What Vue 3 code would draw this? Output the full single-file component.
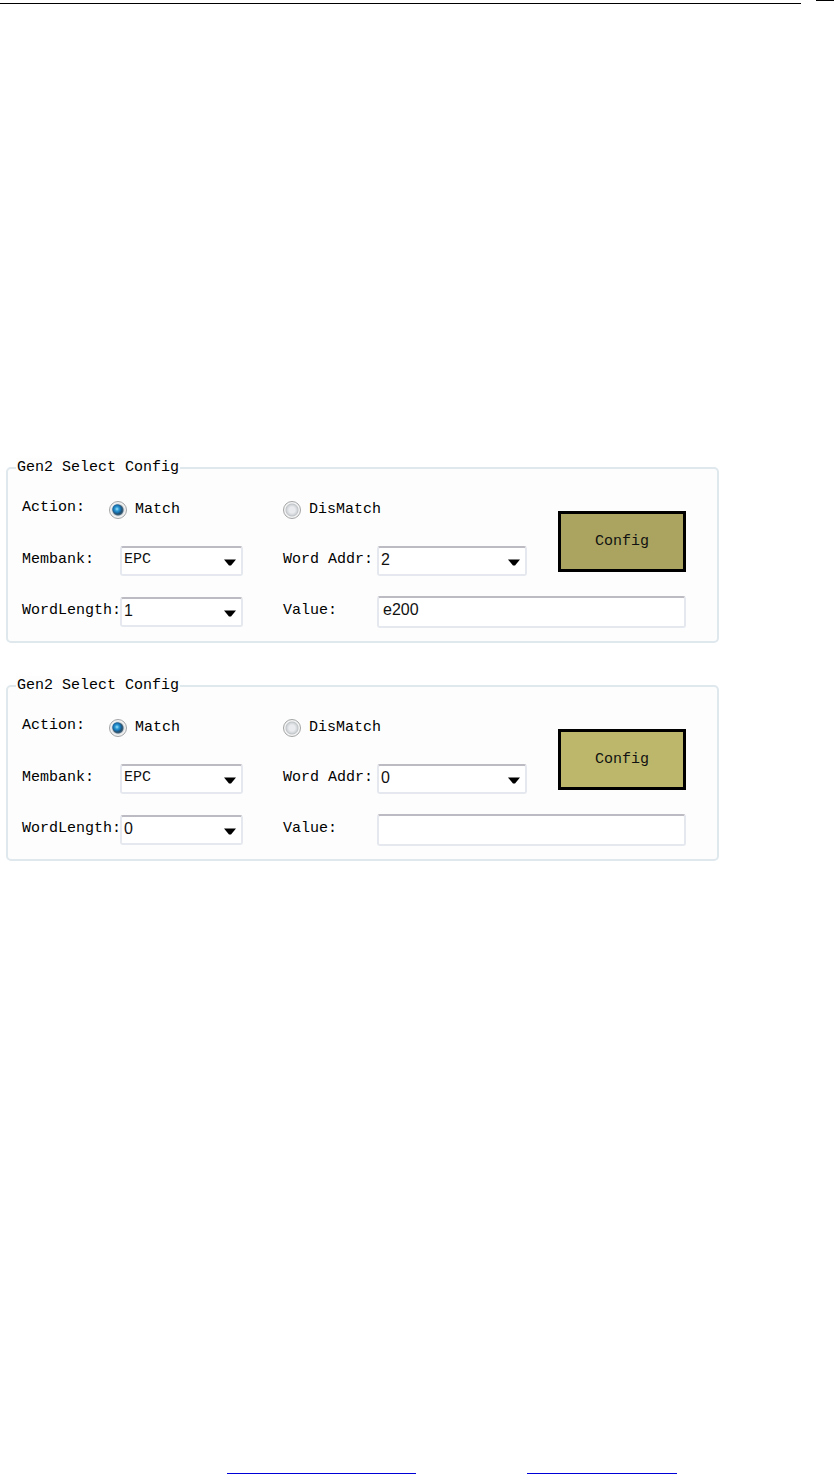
<script setup>
import { reactive } from 'vue'

const panels = reactive([
  { id: 'first', action: 'match', bank: 'EPC', addr: '2', length: '1', value: 'e200', active: true },
  { id: 'second', action: 'match', bank: 'EPC', addr: '0', length: '0', value: '', active: false }
])
const banks = ['EPC', 'TID', 'USER']
const numbers = ['0', '1', '2', '3', '4']
</script>

<template>
  <div class="page">
    <header class="top-rules">
      <div class="rule-long"></div>
      <div class="rule-short"></div>
    </header>

    <main class="content">
      <fieldset v-for="p in panels" :key="p.id" class="panel">
        <legend>Gen2 Select Config</legend>
        <div class="form">
          <span class="label action">Action:</span>
          <label class="radio c-match">
            <input v-model="p.action" type="radio" :name="p.id + '-action'" value="match" />Match
          </label>
          <label class="radio c-dismatch">
            <input v-model="p.action" type="radio" :name="p.id + '-action'" value="dismatch" />DisMatch
          </label>
          <button type="button" class="config" :class="{ active: p.active }">Config</button>

          <label class="label c-left" :for="p.id + '-bank'">Membank:</label>
          <div class="select c-left-field">
            <select :id="p.id + '-bank'" v-model="p.bank" class="mono">
              <option v-for="b in banks" :key="b">{{ b }}</option>
            </select>
            <svg class="arrow" viewBox="0 0 12 7" aria-hidden="true"><path d="M0 0.5H12L7 6.5H5Z" /></svg>
          </div>
          <label class="label c-right" :for="p.id + '-addr'">Word Addr:</label>
          <div class="select c-right-field">
            <select :id="p.id + '-addr'" v-model="p.addr">
              <option v-for="n in numbers" :key="n">{{ n }}</option>
            </select>
            <svg class="arrow" viewBox="0 0 12 7" aria-hidden="true"><path d="M0 0.5H12L7 6.5H5Z" /></svg>
          </div>

          <label class="label c-left" :for="p.id + '-length'">WordLength:</label>
          <div class="select c-left-field">
            <select :id="p.id + '-length'" v-model="p.length">
              <option v-for="n in numbers" :key="n">{{ n }}</option>
            </select>
            <svg class="arrow" viewBox="0 0 12 7" aria-hidden="true"><path d="M0 0.5H12L7 6.5H5Z" /></svg>
          </div>
          <label class="label c-right" :for="p.id + '-value'">Value:</label>
          <input :id="p.id + '-value'" v-model="p.value" class="text c-value" type="text" />
        </div>
      </fieldset>
    </main>

    <footer class="bottom-rules">
      <div class="link-rule first"></div>
      <div class="link-rule second"></div>
    </footer>
  </div>
</template>

<style>
body {
  background: #fff;
}
</style>

<style scoped>
.page {
  box-sizing: border-box;
  min-height: 100vh;
  display: flex;
  flex-direction: column;
  color: #000;
  font: 15px/20px "Liberation Mono", monospace;
}
.top-rules {
  display: grid;
  grid-template-columns: 801fr 18fr;
  column-gap: 15px;
  height: 4px;
}
.rule-long {
  align-self: end;
  height: 1px;
  background: #000;
}
.rule-short {
  height: 1px;
  background: #000;
}
.content {
  flex: 1;
  display: flex;
  flex-direction: column;
  gap: 33px;
  padding: 454px 115px 40px 6px;
}
.panel {
  margin: 0;
  min-width: 0;
  padding: 6px 31px 4px 14px;
  border: 2px solid #dfe8ed;
  border-radius: 5px;
  background: #fdfdfd;
}
legend {
  margin-left: -6px;
  padding: 0 1px;
  background: #fdfdfd;
}
.form {
  display: grid;
  grid-template-columns: 87px 11px 123fr 40fr 94px 150fr 31fr 128px;
  grid-template-rows: repeat(3, 51px);
  align-items: center;
}
.label {
  padding-bottom: 2px;
  white-space: nowrap;
}
.action {
  grid-column: 1;
  padding-bottom: 4px;
}
.action,
.radio {
  grid-row: 1;
}
.c-left {
  grid-column: 1 / 3;
}
.c-left-field {
  grid-column: 3;
}
.c-right {
  grid-column: 5;
}
.c-right-field {
  grid-column: 6;
}
.c-value {
  grid-column: 6 / 9;
}
.c-match {
  grid-column: 2 / 4;
}
.c-dismatch {
  grid-column: 5 / 7;
}
.radio {
  display: flex;
  align-items: center;
  gap: 8px;
}
.radio input {
  appearance: none;
  flex: none;
  width: 18px;
  height: 18px;
  margin: 0;
  border: 1px solid #a2a4a6;
  border-radius: 50%;
  background: radial-gradient(circle, #e9ebee 0 3px, #d3d6da 5px, #c2c5c8 6px, #f4f4f4 7px);
}
.radio input:checked {
  background: radial-gradient(circle at 7px 7px, #a5e4fb 0, #2d9bd6 2px, #1668a4 4px, transparent 5px),
    radial-gradient(circle, #24506f 0 4px, #46647a 5px, #d5dadd 6px, #f2f2f2 7px);
}
.config {
  grid-column: 8;
  grid-row: 1 / 3;
  align-self: end;
  height: 61px;
  margin: 0 0 14px;
  padding: 0;
  border: 3px solid #000;
  background: #bdb76b;
  color: #111;
  font: inherit;
}
.config.active {
  background: #aaa460;
}
.select {
  position: relative;
}
select,
.text {
  box-sizing: border-box;
  display: block;
  width: 100%;
  height: 30px;
  margin: 0;
  border: 2px solid #e5e9ef;
  border-top-color: #bcbbc3;
  border-radius: 3px;
  background: #fff;
  color: #111;
  font: 16px/20px "Liberation Sans", sans-serif;
}
select {
  appearance: none;
  padding: 0 24px 2px 2px;
}
select.mono {
  font: inherit;
}
.text {
  height: 32px;
  padding: 0 4px 4px;
}
.arrow {
  position: absolute;
  top: 13px;
  right: 7px;
  width: 12px;
  height: 7px;
  fill: #000;
  pointer-events: none;
}
.bottom-rules {
  display: grid;
  grid-template-columns: 227fr 189fr 111fr 150fr 157fr;
}
.link-rule {
  height: 1px;
  background: #0000d8;
}
.first {
  grid-column: 2;
}
.second {
  grid-column: 4;
}
</style>
